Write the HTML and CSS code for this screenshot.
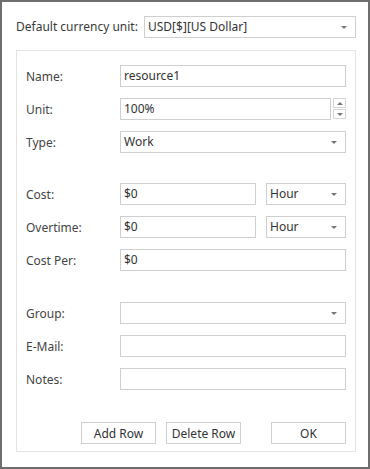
FILE: index.html
```html
<!DOCTYPE html>
<html lang="en">
<head>
    <meta charset="UTF-8">
    <title>Resource</title>
    <link rel="stylesheet" href="styles.css">
</head>
<body>
    <div class="dialog">
        <div class="currency-row">
            <span class="currency-label">Default currency unit:</span>
            <div class="field combo currency-combo">USD[$][US Dollar]</div>
        </div>

        <div class="panel">
            <div class="group">
                <span class="label">Name:</span>
                <div class="field">resource1</div>

                <span class="label">Unit:</span>
                <div class="spin-wrap">
                    <div class="field">100%</div>
                    <div class="spinner">
                        <span class="spin-btn up"></span>
                        <span class="spin-btn down"></span>
                    </div>
                </div>

                <span class="label">Type:</span>
                <div class="field combo">Work</div>
            </div>

            <div class="group">
                <span class="label">Cost:</span>
                <div class="pair">
                    <div class="field">$0</div>
                    <div class="field combo">Hour</div>
                </div>

                <span class="label">Overtime:</span>
                <div class="pair">
                    <div class="field">$0</div>
                    <div class="field combo">Hour</div>
                </div>

                <span class="label">Cost Per:</span>
                <div class="field">$0</div>
            </div>

            <div class="group">
                <span class="label">Group:</span>
                <div class="field combo"></div>

                <span class="label">E-Mail:</span>
                <div class="field"></div>

                <span class="label">Notes:</span>
                <div class="field"></div>
            </div>

            <div class="buttons">
                <button class="btn">Add Row</button>
                <button class="btn">Delete Row</button>
                <button class="btn ok">OK</button>
            </div>
        </div>
    </div>
</body>
</html>
```

FILE: styles.css
```css
/* General Styles */
body {
    margin: 0;
    font-family: 'Noto Sans', sans-serif;
    font-size: 12px;
    color: #3a3a3a;
    background-color: #fff;
}

.dialog {
    width: 370px;
    height: 469px;
    box-sizing: border-box;
    border: 2px solid #6e6e6e;
    padding: 13px 12px 0 14px;
}

/* Currency row */
.currency-row {
    display: flex;
    align-items: center;
    height: 23px;
}

.currency-label {
    width: 128px;
    white-space: nowrap;
}

.currency-combo {
    flex: 1;
    height: 23px;
    line-height: 21px;
}

/* Fields */
.field {
    position: relative;
    height: 22px;
    box-sizing: border-box;
    border: 1px solid #cfcfcf;
    background-color: #fff;
    padding: 0 0 0 3px;
    line-height: 20px;
    color: #333;
    white-space: nowrap;
}

.combo::after {
    content: "";
    position: absolute;
    right: 8px;
    top: 9px;
    border-left: 3px solid transparent;
    border-right: 3px solid transparent;
    border-top: 3px solid #777;
}

/* Panel */
.panel {
    margin-top: 12px;
    border: 1px solid #e4e4e4;
    padding: 14px 9px 7px 9px;
}

.group {
    display: grid;
    grid-template-columns: 94px 1fr;
    row-gap: 11px;
    align-items: center;
}

.group + .group {
    margin-top: 30px;
}

.group + .group + .group {
    margin-top: 31px;
}

.label {
    color: #444;
}

.spin-wrap {
    display: flex;
    gap: 2px;
}

.spin-wrap .field {
    flex: 1;
}

.spinner {
    display: flex;
    flex-direction: column;
    gap: 1px;
    width: 13px;
}

.spin-btn {
    position: relative;
    height: 10px;
    box-sizing: border-box;
    border: 1px solid #d6d6d6;
}

.spin-btn::after {
    content: "";
    position: absolute;
    left: 3px;
    top: 3px;
    border-left: 3px solid transparent;
    border-right: 3px solid transparent;
}

.spin-btn.up::after {
    border-bottom: 3px solid #777;
}

.spin-btn.down::after {
    border-top: 3px solid #777;
}

.pair {
    display: grid;
    grid-template-columns: 136px 1fr;
    column-gap: 10px;
}

/* Buttons */
.buttons {
    display: flex;
    justify-content: flex-end;
    margin-top: 32px;
}

.btn {
    width: 75px;
    height: 22px;
    margin: 0 0 0 10px;
    padding: 0;
    font-family: inherit;
    font-size: 12px;
    color: #333;
    background-color: #fff;
    border: 1px solid #cfcfcf;
}

.btn.ok {
    margin-left: 30px;
}
```
